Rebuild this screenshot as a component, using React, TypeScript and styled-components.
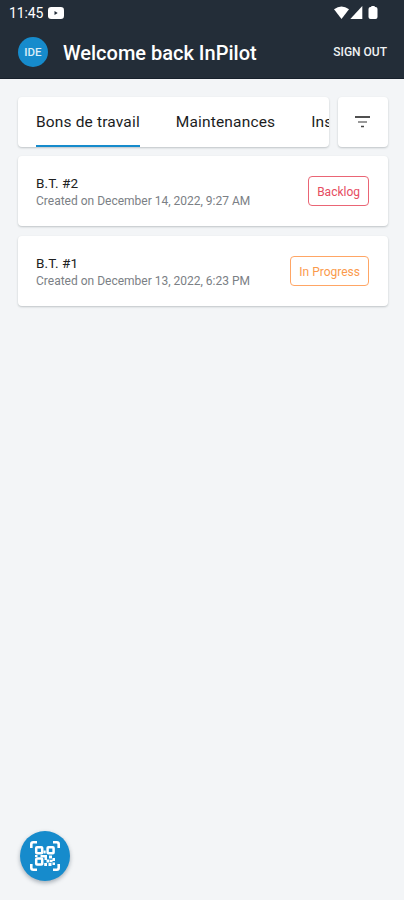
import React from "react";
import styled, { createGlobalStyle } from "styled-components";

const GlobalStyle = createGlobalStyle`
  * { box-sizing: border-box; }
  body { margin: 0; background: #f3f5f7; font-family: Roboto, "Liberation Sans", sans-serif; }
`;

const Screen = styled.div`
  height: 900px;
  display: flex;
  flex-direction: column;
  overflow: hidden;
  background: #f3f5f7;
`;

const Top = styled.header`
  height: 79px;
  flex: none;
  background: #232d38;
  border-bottom: 1px solid #17202b;
  color: #fff;
`;

const StatusBar = styled.div`
  height: 25px;
  padding: 0 25px 0 9px;
  display: flex;
  align-items: center;
  justify-content: space-between;
`;

const StatusGroup = styled.div<{ $gap: number }>`
  display: flex;
  align-items: center;
  gap: ${(p) => p.$gap}px;
`;

const Clock = styled.span`
  font-size: 14px;
  line-height: 16px;
  letter-spacing: -0.1px;
`;

const TitleBar = styled.div`
  height: 54px;
  padding: 0 17px 0 18px;
  display: flex;
  align-items: center;
`;

const Avatar = styled.div`
  width: 30px;
  height: 30px;
  border-radius: 50%;
  background: #168bcc;
  color: #d9edf8;
  font-size: 11.5px;
  font-weight: 500;
  display: flex;
  align-items: center;
  justify-content: center;
`;

const Title = styled.h1`
  margin: 1px 0 0 15px;
  font-size: 20px;
  line-height: 24px;
  font-weight: 500;
  white-space: nowrap;
`;

const SignOut = styled.button`
  margin-left: auto;
  padding: 0;
  border: 0;
  background: none;
  color: #f0f2f3;
  font: 500 12px/16px Roboto, sans-serif;
  white-space: nowrap;
`;

const Content = styled.main`
  flex: 1;
  padding: 18px 16px 0 18px;
  display: flex;
  flex-direction: column;
`;

const Surface = styled.div`
  background: #fff;
  border-radius: 4px;
  box-shadow: 0 1px 2px rgba(40, 50, 60, 0.25);
`;

const Toolbar = styled.div`
  display: flex;
  gap: 9px;
  height: 50px;
  margin-bottom: 9px;
`;

const Tabs = styled(Surface)`
  width: 311px;
  padding-left: 18px;
  display: flex;
  gap: 36px;
  overflow: hidden;
`;

const Tab = styled.div<{ $active?: boolean }>`
  flex: none;
  height: 50px;
  border-bottom: 2px solid ${(p) => (p.$active ? "#168bcc" : "transparent")};
  font-size: 15.5px;
  line-height: 50px;
  letter-spacing: 0.16px;
  color: #1b1c1d;
  white-space: nowrap;
`;

const FilterButton = styled(Surface)`
  width: 50px;
  padding-right: 2px;
  display: flex;
  align-items: center;
  justify-content: center;
`;

const OrderCard = styled(Surface)`
  height: 70px;
  margin-bottom: 10px;
  padding: 0 19px 0 18px;
  display: flex;
  align-items: center;
  justify-content: space-between;
`;

const OrderText = styled.div`
  padding-top: 1px;
`;

const OrderName = styled.div`
  font-size: 13.5px;
  line-height: 18px;
  letter-spacing: 0.1px;
  color: #202122;
`;

const OrderDate = styled.div`
  font-size: 12px;
  line-height: 18px;
  color: #7b8085;
  white-space: nowrap;
`;

const Status = styled.div<{ $color: string; $border: string }>`
  height: 30px;
  padding: 0 8px;
  border: 1px solid ${(p) => p.$border};
  border-radius: 4px;
  color: ${(p) => p.$color};
  font-size: 12px;
  line-height: 30px;
  white-space: nowrap;
`;

const ScanButton = styled.button`
  position: absolute;
  left: 20px;
  top: 831px;
  width: 50px;
  height: 50px;
  padding: 0;
  border: 0;
  border-radius: 50%;
  background: #168bcc;
  box-shadow: 0 2px 4px rgba(20, 40, 60, 0.35);
  display: flex;
  align-items: center;
  justify-content: center;
`;

const VideoIcon = () => (
  <svg width="16" height="12" viewBox="0 0 16 12">
    <rect width="16" height="12" rx="3.2" fill="#fff" />
    <path d="M6.5 4v4l3.2-2z" fill="#232d38" />
  </svg>
);

const SignalIcons = () => (
  <svg width="46" height="14" viewBox="0 0 46 14" fill="#fff">
    <path d="M1 3.2Q8.500-2 16 3.200L8.500 13z" />
    <path d="M29.300 0v13H17.300z" />
    <path d="M38.300 0h3.400v1h.8q2 0 2 2v8q0 2-2 2h-5q-2 0-2-2V3q0-2 2-2h.8z" />
  </svg>
);

const FilterIcon = () => (
  <svg width="15" height="12" viewBox="0 0 15 12">
    <path d="M0 1h15" stroke="#252525" strokeWidth="1.6" />
    <path d="M3 6h9" stroke="#777" strokeWidth="1.5" />
    <path d="M6 10.500h3" stroke="#444" strokeWidth="1.5" />
  </svg>
);

const QrScanIcon = () => (
  <svg width="30" height="30" viewBox="0 0 30 30" fill="none" stroke="#fff">
    <path d="M1.300 7V3.300q0-2 2-2H7M23 1.300h3.700q2 0 2 2V7M28.700 23v3.700q0 2-2 2H23M7 28.700H3.300q-2 0-2-2V23" strokeWidth="2.600" />
    <rect x="6.200" y="6.200" width="6" height="6" rx="0.800" strokeWidth="2.500" />
    <rect x="17.600" y="6.200" width="6" height="6" rx="0.800" strokeWidth="2.500" />
    <rect x="6.200" y="17.600" width="6" height="6" rx="0.800" strokeWidth="2.500" />
    <g fill="#fff" stroke="none">
      <path d="M13.500 9.500h2.200v3h-2.200zM5 14h2.500v2H5zM10.500 14H17v5h-2.500v-2.500h-4zM19 14.500h3v3h-3zM22.500 17h2.500v3h-2.500zM16.500 18.500h3v3h-3zM20 18.800h2.500v2.500H20zM18.500 22h3v2.900h-3zM22.500 21.500H25V24h-2.500zM14.200 22h2.800v2.900h-2.800z" />
    </g>
  </svg>
);

const orders = [
  { name: "B.T. #2", date: "Created on December 14, 2022, 9:27 AM", status: "Backlog", color: "#e64c61", border: "#ea6575" },
  { name: "B.T. #1", date: "Created on December 13, 2022, 6:23 PM", status: "In Progress", color: "#fb9a4c", border: "#ffa665" },
];

export default function App() {
  return (
    <Screen>
      <GlobalStyle />
      <Top>
        <StatusBar>
          <StatusGroup $gap={5}>
            <Clock>11:45</Clock>
            <VideoIcon />
          </StatusGroup>
          <SignalIcons />
        </StatusBar>
        <TitleBar>
          <Avatar>IDE</Avatar>
          <Title>Welcome back InPilot</Title>
          <SignOut>SIGN OUT</SignOut>
        </TitleBar>
      </Top>
      <Content>
        <Toolbar>
          <Tabs>
            <Tab $active>Bons de travail</Tab>
            <Tab>Maintenances</Tab>
            <Tab>Inspections</Tab>
          </Tabs>
          <FilterButton>
            <FilterIcon />
          </FilterButton>
        </Toolbar>
        {orders.map((o) => (
          <OrderCard key={o.name}>
            <OrderText>
              <OrderName>{o.name}</OrderName>
              <OrderDate>{o.date}</OrderDate>
            </OrderText>
            <Status $color={o.color} $border={o.border}>{o.status}</Status>
          </OrderCard>
        ))}
      </Content>
      <ScanButton aria-label="QR">
        <QrScanIcon />
      </ScanButton>
    </Screen>
  );
}
